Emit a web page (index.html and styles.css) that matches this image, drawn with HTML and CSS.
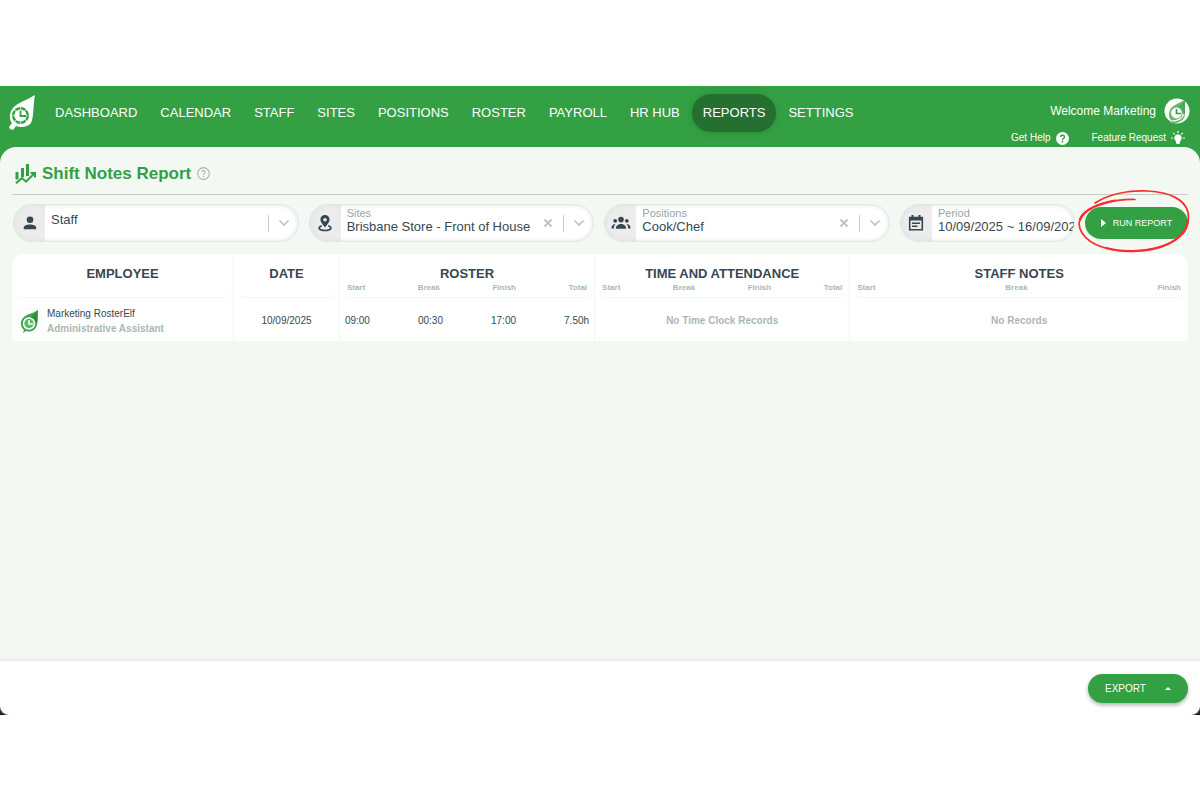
FILE: index.html
```html
<!DOCTYPE html>
<html lang="en">
<head>
<meta charset="utf-8">
<meta name="viewport" content="width=device-width, initial-scale=1">
<title>Shift Notes Report</title>
<link rel="stylesheet" href="styles.css">
</head>
<body>
<svg class="defs" aria-hidden="true">
  <symbol id="chevron" viewBox="0 0 12 12"><path d="M1.500 3.500 6 8l4.500-4.500" fill="none" stroke="currentColor" stroke-width="1.700"/></symbol>
  <symbol id="cross" viewBox="0 0 10 10"><path d="M1.500 1.500l7 7M8.500 1.500l-7 7" fill="none" stroke="currentColor" stroke-width="1.900"/></symbol>
</svg>
<div class="app">
  <header class="topbar">
    <a class="logo" href="#" aria-label="RosterElf home">
      <svg viewBox="0 0 27 36" width="27" height="36">
        <path d="M26 0C18 5 8 8 4 13c-4 5-4 11-1 15l-3 4 1 2 3 1 3-4c5 2 12 1 15-3C25 22 24 10 26 0z" fill="#fff"/>
        <circle cx="11.500" cy="20.500" r="7.300" fill="none" stroke="#33a043" stroke-width="2.400" stroke-dasharray="5 .73"/>
        <path d="M11.500 15.500v5.500h5.500" fill="none" stroke="#33a043" stroke-width="1.800"/>
      </svg>
    </a>
    <nav class="nav">
      <a href="#">DASHBOARD</a>
      <a href="#">CALENDAR</a>
      <a href="#">STAFF</a>
      <a href="#">SITES</a>
      <a href="#">POSITIONS</a>
      <a href="#">ROSTER</a>
      <a href="#">PAYROLL</a>
      <a href="#">HR HUB</a>
      <a href="#" class="active" aria-current="page">REPORTS</a>
      <a href="#">SETTINGS</a>
    </nav>
    <div class="account">
      <a class="welcome" href="#">Welcome Marketing
        <svg viewBox="0 0 26 26" width="26" height="26">
          <circle cx="13" cy="13" r="12.500" fill="#fff"/>
          <path d="M21 2C14 6 8 7 6 12c-2 5-1 8 1 10l-1 3c8 1 14-2 15-8z" fill="#69b875"/>
          <path d="M21 2 13 10l8 7z" fill="#4aa85a"/>
          <circle cx="12.500" cy="15" r="6" fill="#fff" stroke="#69b875" stroke-width="1.200"/>
          <path d="M12.500 11v4.500H17" fill="none" stroke="#33a043" stroke-width="1.700"/>
          <path d="M7 23c6 0 11-2 13-7" fill="none" stroke="#fff" stroke-width="1.200"/>
        </svg>
      </a>
      <div class="help-links">
        <a href="#">Get Help
          <svg viewBox="0 0 12 12" width="13" height="13"><circle cx="6" cy="6" r="6" fill="#fff"/><path d="M4.200 4.700c0-2.400 3.700-2.300 3.700 0C7.900 6 6 6 6 7.500M6 8.400v1.400" fill="none" stroke="#33a043" stroke-width="1.300"/></svg>
        </a>
        <a href="#">Feature Request
          <svg viewBox="0 0 14 14" width="14" height="14"><path d="M7 3.200a3.800 3.800 0 0 1 2.300 6.800L8.500 13h-3l-.8-3A3.800 3.800 0 0 1 7 3.200z" fill="#fff"/><path d="M7 0v2M0 7h2M12 7h2M2.300 2l1.300 1.400M11.700 2l-1.300 1.400" stroke="#fff" stroke-width="1.200"/></svg>
        </a>
      </div>
    </div>
  </header>

  <main class="panel">
    <div class="title-row">
      <svg viewBox="0 0 21 20" width="21" height="20" fill="none" stroke="#33a043">
        <path d="M2 8v7.500M7.500 4v9M12.500 0v12" stroke-width="3"/>
        <path d="M1 19.300l6-5.300 4 3.700 8-8" stroke-width="2"/><path d="M15.500 9H20v4.500" stroke-width="2"/>
      </svg>
      <h1>Shift Notes Report</h1>
      <button class="info" type="button" aria-label="About this report">
        <svg viewBox="0 0 12 12" width="13" height="13" fill="none" stroke="#a9b3b3"><circle cx="6" cy="6" r="5.400"/><path d="M4.400 4.800c0-2.100 3.200-2.100 3.200 0C7.600 5.900 6 6 6 7.300M6 8.100v1.200"/></svg>
      </button>
    </div>

    <form class="filters">
      <div class="filter">
        <span class="filter-icon"><svg viewBox="0 0 14 14" width="14" height="14" fill="#37474f"><circle cx="7" cy="3.800" r="3.300"/><path d="M.8 13.300V11.500C.8 7.500 13.200 7.500 13.200 11.500v1.800z"/></svg></span>
        <div class="field single"><select aria-label="Staff"><option>Staff</option></select></div>
        <span class="divider"></span>
        <svg class="chevron"><use href="#chevron"/></svg>
      </div>
      <div class="filter">
        <span class="filter-icon"><svg viewBox="0 0 14 18" width="14" height="18"><path d="M7 1a4.600 4.600 0 0 1 4.600 4.600C11.600 8.500 7 13.500 7 13.500S2.400 8.500 2.400 5.600A4.600 4.600 0 0 1 7 1zm0 2.900a1.800 1.800 0 1 0 0 3.600 1.800 1.800 0 0 0 0-3.600z" fill="#37474f"/><path d="M3.800 11.800C-1 13.500 1 16.500 7 16.500s8-3 3.200-4.700" fill="none" stroke="#37474f" stroke-width="1.700"/></svg></span>
        <div class="field"><label for="sites">Sites</label><select id="sites"><option>Brisbane Store - Front of House</option></select></div>
        <button class="clear" type="button" aria-label="Clear sites"><svg viewBox="0 0 10 10" width="10" height="10"><use href="#cross"/></svg></button>
        <span class="divider"></span>
        <svg class="chevron"><use href="#chevron"/></svg>
      </div>
      <div class="filter">
        <span class="filter-icon"><svg viewBox="0 0 20 14" width="20" height="14" fill="#37474f"><circle cx="10" cy="3.600" r="2.800"/><circle cx="4.200" cy="4.800" r="1.900"/><circle cx="15.800" cy="4.800" r="1.900"/><path d="M4.800 12.800c0-6.400 10.400-6.400 10.400 0zM.4 12.600c0-3 1.600-4.600 4-4.600-1.200 1.300-1.500 3-1.500 4.600zM19.600 12.600c0-3-1.600-4.600-4-4.600 1.200 1.300 1.500 3 1.500 4.600z"/></svg></span>
        <div class="field"><label for="positions">Positions</label><select id="positions"><option>Cook/Chef</option></select></div>
        <button class="clear" type="button" aria-label="Clear positions"><svg viewBox="0 0 10 10" width="10" height="10"><use href="#cross"/></svg></button>
        <span class="divider"></span>
        <svg class="chevron"><use href="#chevron"/></svg>
      </div>
      <div class="filter">
        <span class="filter-icon"><svg viewBox="0 0 16 16" width="16" height="16"><path d="M1.700 2.500h12.600v12.300H1.700z" fill="none" stroke="#37474f" stroke-width="1.600"/><path d="M1 2h14v3.500H1zM3.500 0h2v3h-2zM10.500 0h2v3h-2z" fill="#37474f"/><path d="M4 8.200h8M4 11.300h5.500" stroke="#37474f" stroke-width="1.500"/></svg></span>
        <div class="field"><label for="period">Period</label><input id="period" type="text" value="10/09/2025 ~ 16/09/2025"></div>
      </div>
      <div class="run">
        <button class="run-button" type="button"><svg viewBox="0 0 5 8" width="5" height="8"><path d="M0 0l5 4-5 4z" fill="#fff"/></svg>RUN REPORT</button>
        <svg class="highlight" viewBox="0 0 116 68" width="116" height="68" aria-hidden="true">
          <path d="M59 12.500C38 12 15 18 6 28c-8 12 2 26 20 32 22 7 50 5 68-4 15-8 20-19 18-31C109 13 94 5 72 4 53 3 33 7 19 16" fill="none" stroke="#fb2c30" stroke-width="1.700" stroke-linecap="round"/>
          <path d="M39 13.500C25 16 8 22 4 33M30 61c17 5 45 4 62-4 13-6 19-15 20-24" fill="none" stroke="#fb2c30" stroke-width="2.200" stroke-linecap="round"/>
        </svg>
      </div>
    </form>

    <table class="report">
      <colgroup><col class="c-employee"><col class="c-date"><col class="c-times"><col class="c-times"><col class="c-notes"></colgroup>
      <thead>
        <tr>
          <th scope="col"><div class="head">EMPLOYEE</div></th>
          <th scope="col"><div class="head">DATE</div></th>
          <th scope="col"><div class="head">ROSTER<div class="subs"><span>Start</span><span>Break</span><span>Finish</span><span>Total</span></div></div></th>
          <th scope="col"><div class="head">TIME AND ATTENDANCE<div class="subs"><span>Start</span><span>Break</span><span>Finish</span><span>Total</span></div></div></th>
          <th scope="col"><div class="head">STAFF NOTES<div class="subs"><span>Start</span><span>Break</span><span>Finish</span></div></div></th>
        </tr>
      </thead>
      <tbody>
        <tr>
          <td>
            <div class="person">
              <svg viewBox="0 0 26 26" width="26" height="26">
                <circle cx="13" cy="13" r="12.500" fill="#fff" stroke="#f3f5f4"/>
                <path d="M21 2c-1 7 1 14-3 19-3 3-7 3-9 2l-3 2 1-3c-4-3-4-9-1-12 3-4 9-4 15-8z" fill="#3fa650"/>
                <path d="M21 2 14 10l6 5c1-5 0-9 1-13z" fill="#2d8c3c"/>
                <circle cx="12" cy="15.500" r="5.500" fill="#5bb867" stroke="#fff" stroke-width="1.500"/>
                <path d="M12 12v4h4" fill="none" stroke="#fff" stroke-width="1.500"/>
              </svg>
              <div>Marketing RosterElf<div class="role">Administrative Assistant</div></div>
            </div>
          </td>
          <td>10/09/2025</td>
          <td><div class="times"><span>09:00</span><span>00:30</span><span>17:00</span><span>7.50h</span></div></td>
          <td class="empty">No Time Clock Records</td>
          <td class="empty">No Records</td>
        </tr>
      </tbody>
    </table>
  </main>

  <footer class="actions">
    <button class="export" type="button">EXPORT<svg viewBox="0 0 6 3" width="6" height="3"><path d="M0 3l3-3 3 3z" fill="#fff"/></svg></button>
  </footer>
</div>
</body>
</html>
```
FILE: styles.css
```css
* { box-sizing: border-box; }

body {
  margin: 0;
  min-height: 100vh;
  padding: 86px 0 85px;
  display: flex;
  background: #fff;
  color: #37474f;
  font-family: "Liberation Sans", Arial, sans-serif;
  font-size: 13px;
}

a { color: inherit; text-decoration: none; }
button, select, input { font: inherit; color: inherit; border: 0; padding: 0; margin: 0; background: none; outline: 0; }
button { cursor: pointer; }
svg { display: block; flex: none; }
.defs { position: absolute; width: 0; height: 0; }

.app {
  flex: 1;
  min-width: 0;
  display: flex;
  flex-direction: column;
  overflow: hidden;
  background: linear-gradient(#33a043 50%, #0b1114 50%);
}

.topbar {
  display: flex;
  align-items: flex-start;
  padding: 8px 10px 2px 9px;
  color: #fff;
}
.logo { padding-top: 1px; margin-right: 8px; }
.nav { display: flex; gap: 1px; }
.nav a {
  padding: 0 11px;
  line-height: 38px;
  border-radius: 19px;
  white-space: nowrap;
}
.nav .active { background: #256f31; box-shadow: 0 1px 6px #2b8b39; }

.account { margin-left: auto; padding-top: 4px; white-space: nowrap; }
.welcome { display: flex; align-items: center; justify-content: flex-end; gap: 8px; font-size: 12px; }
.help-links {
  display: flex;
  justify-content: flex-end;
  gap: 23px;
  padding: 7px 5px 0 0;
  font-size: 10px;
  line-height: 14px;
}
.help-links a { display: flex; align-items: center; gap: 5px; }

.panel {
  flex: 1;
  padding: 0 12px;
  background: #f3f8f3;
  border-radius: 16px 16px 0 0;
}

.title-row {
  display: flex;
  align-items: center;
  gap: 6px;
  padding: 14px 3px 8px;
  border-bottom: 1px solid #c6cecb;
}
h1 { margin: 0; font-size: 17px; line-height: 25px; color: #33a043; }

.filters {
  display: grid;
  grid-template-columns: repeat(3, 1fr) 175px 103px;
  gap: 10px;
  align-items: center;
  padding: 9px 0 0 1px;
}
.filter {
  display: flex;
  align-items: center;
  height: 38px;
  overflow: hidden;
  border: 1px solid #e3e6e4;
  border-radius: 19px;
  background: linear-gradient(90deg, #ececec 31px, #fff 31px);
  box-shadow: inset 0 0 4px #dddfde;
}
.filter-icon { flex: none; width: 31px; display: flex; justify-content: center; }
.field { flex: 1; min-width: 0; padding: 0 0 4px 6px; display: flex; flex-direction: column; }
.field label { font-size: 11px; line-height: 11px; color: #98a5a5; }
.field select, .field input {
  width: 100%;
  height: 15px;
  line-height: 15px;
  appearance: none;
}
.field.single { padding-bottom: 8px; }
.clear { padding: 5px; margin-right: 5px; color: #bfc3c3; }
.divider { width: 1px; height: 17px; background: #c9cccc; }
.chevron { width: 12px; height: 12px; margin: 0 8px 0 9px; color: #bfc3c3; }

.run { position: relative; }
.run-button {
  width: 100%;
  height: 32px;
  display: flex;
  align-items: center;
  justify-content: center;
  gap: 7px;
  border-radius: 16px;
  background: #33a043;
  color: #fff;
  font-size: 9px;
}
.highlight { position: absolute; left: -9px; top: -20px; pointer-events: none; }

.report {
  width: 100%;
  margin-top: 12px;
  table-layout: fixed;
  border-collapse: separate;
  border-spacing: 0;
  border-radius: 12px 12px 0 0;
  background: #fff;
  font-size: 10px;
  text-align: center;
}
.c-employee { width: 18.8%; }
.c-date { width: 9%; }
.c-times { width: 21.7%; }
.report th, .report td { padding: 0; border-left: 1px solid #f3f7f4; }
.report th:first-child, .report td:first-child { border-left: 0; }
.report td { height: 43px; padding-top: 2px; }
.head {
  height: 44px;
  padding: 12px 7px 0;
  border-bottom: 1px solid #f3f7f4;
  border-radius: 0 0 12px 12px;
  font-size: 13px;
  line-height: 16px;
}
.subs { display: flex; justify-content: space-between; font-size: 8px; line-height: 12px; color: #abb7b5; }
.times { display: flex; justify-content: space-between; padding: 0 5px; }
.person { display: flex; align-items: center; gap: 4px; padding-left: 5px; text-align: left; line-height: 15px; }
.role, .report .empty { font-weight: bold; color: #abb7b5; }

.actions {
  display: flex;
  justify-content: flex-end;
  padding: 13px 12px 12px;
  border-radius: 0 0 9px 9px;
  background: #fff;
  box-shadow: 0 -1px 4px #dfe6df;
}
.export {
  width: 100px;
  height: 29px;
  display: flex;
  align-items: center;
  justify-content: space-between;
  padding: 0 17px;
  border-radius: 15px;
  background: #33a043;
  color: #fff;
  font-size: 10px;
  box-shadow: 0 2px 4px #a9afaa;
}
```
